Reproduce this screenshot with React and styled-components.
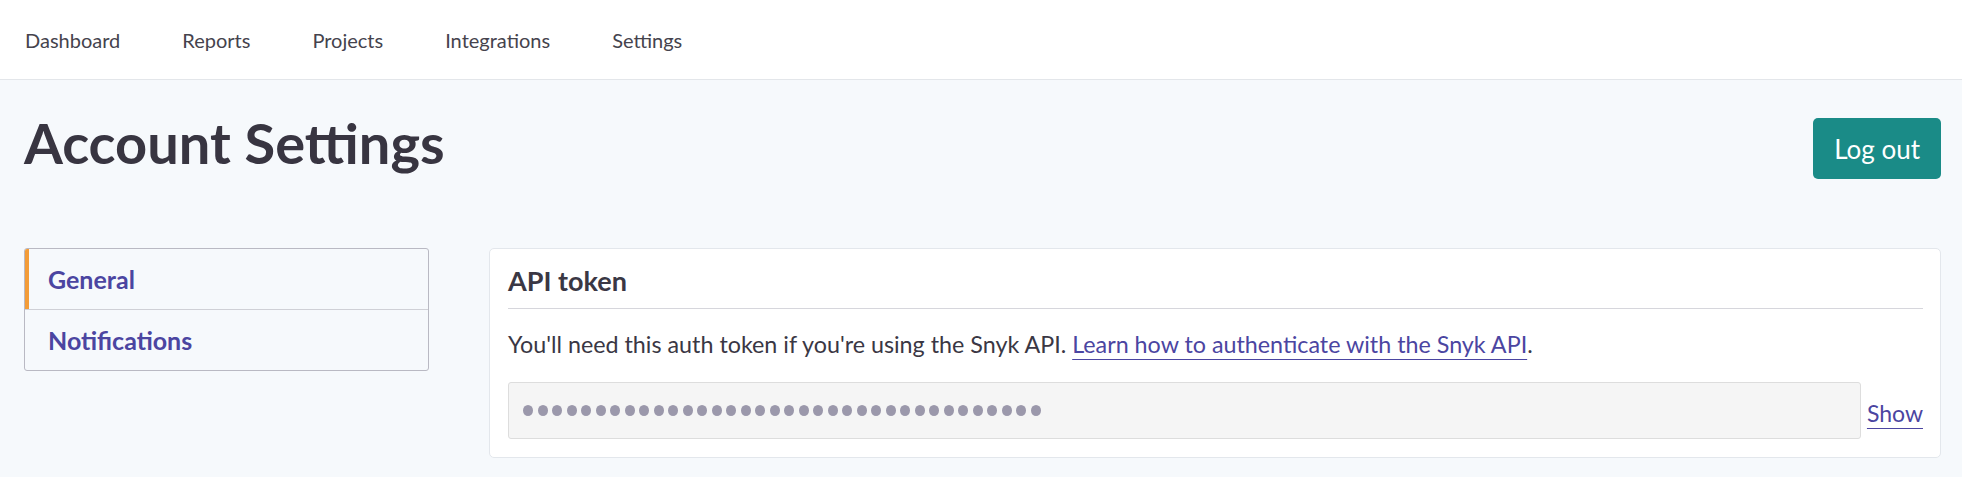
import styled, { createGlobalStyle } from "styled-components";

const GlobalStyle = createGlobalStyle`
  body {
    margin: 0;
    background: #f6f9fc;
    font-family: Lato, "Open Sans", sans-serif;
    color: #3a3744;
  }
`;

const TopNav = styled.nav`
  height: 79px;
  background: #ffffff;
  border-bottom: 1px solid #e3e6ea;
  display: flex;
  align-items: center;
  gap: 62px;
  padding-left: 25px;
`;

const NavItem = styled.a`
  font-size: 20px;
  color: #45434d;
  text-decoration: none;
`;

const Page = styled.main`
  padding: 0 21px 0 24px;
`;

const Header = styled.header`
  height: 168px;
  box-sizing: border-box;
  padding-top: 35px;
  display: flex;
  justify-content: space-between;
  align-items: flex-start;
`;

const Title = styled.h1`
  margin: 0;
  font-size: 56px;
  line-height: 56px;
  font-weight: 700;
  color: #383541;
`;

const LogoutButton = styled.button`
  margin-top: 3px;
  height: 61px;
  padding: 0 21px;
  border: none;
  border-radius: 5px;
  background: #1a8b87;
  color: #ffffff;
  font-family: inherit;
  font-size: 26px;
  cursor: pointer;
`;

const Content = styled.div`
  display: flex;
  align-items: flex-start;
  gap: 60px;
`;

const SideMenu = styled.ul`
  list-style: none;
  margin: 0;
  padding: 0;
  width: 405px;
  box-sizing: border-box;
  border: 1px solid #b9b9c3;
  border-radius: 3px;
  overflow: hidden;
`;

const MenuItem = styled.li`
  height: 60px;
  display: flex;
  align-items: center;
  padding-left: 23px;
  font-size: 25px;
  font-weight: 700;
  color: #4b45a1;
  box-shadow: ${(p) => (p.$active ? "inset 4px 0 0 #f39c38" : "none")};
  & + & {
    border-top: 1px solid #cfd0d6;
  }
`;

const Card = styled.section`
  flex: 1;
  background: #ffffff;
  border: 1px solid #e3e7ec;
  border-radius: 5px;
  padding: 17px 17px 18px 18px;
`;

const CardTitle = styled.h2`
  margin: 0;
  font-size: 27px;
  line-height: 30px;
  font-weight: 700;
  color: #3a3744;
  padding-bottom: 12px;
  border-bottom: 1px solid #d6d6dc;
`;

const Text = styled.p`
  margin: 20px 0 0;
  font-size: 23.3px;
  line-height: 30px;
  color: #3a3744;
`;

const Link = styled.a`
  color: #4b45a1;
  text-decoration: underline;
  text-decoration-thickness: 1px;
  text-underline-offset: 6px;
`;

const TokenRow = styled.div`
  margin-top: 23px;
  display: flex;
  align-items: center;
  gap: 6px;
`;

const TokenField = styled.div`
  flex: 1;
  height: 57px;
  box-sizing: border-box;
  background: #f5f5f5;
  border: 1px solid #dddddd;
  border-radius: 3px;
  padding-left: 14px;
  display: flex;
  align-items: center;
  gap: 4.5px;
`;

const Dot = styled.span`
  width: 10px;
  height: 11px;
  border-radius: 50%;
  background: #9b98ab;
  flex: none;
`;

const ShowLink = styled(Link)`
  font-size: 23px;
  margin-top: 4px;
`;

const navItems = ["Dashboard", "Reports", "Projects", "Integrations", "Settings"];

export default function App() {
  return (
    <>
      <GlobalStyle />
      <TopNav>
        {navItems.map((n) => (
          <NavItem key={n}>{n}</NavItem>
        ))}
      </TopNav>
      <Page>
        <Header>
          <Title>Account Settings</Title>
          <LogoutButton>Log out</LogoutButton>
        </Header>
        <Content>
          <SideMenu>
            <MenuItem $active>General</MenuItem>
            <MenuItem>Notifications</MenuItem>
          </SideMenu>
          <Card>
            <CardTitle>API token</CardTitle>
            <Text>
              You'll need this auth token if you're using the Snyk API.{" "}
              <Link href="#">Learn how to authenticate with the Snyk API</Link>.
            </Text>
            <TokenRow>
              <TokenField>
                {Array.from({ length: 36 }).map((_, i) => (
                  <Dot key={i} />
                ))}
              </TokenField>
              <ShowLink href="#">Show</ShowLink>
            </TokenRow>
          </Card>
        </Content>
      </Page>
    </>
  );
}
